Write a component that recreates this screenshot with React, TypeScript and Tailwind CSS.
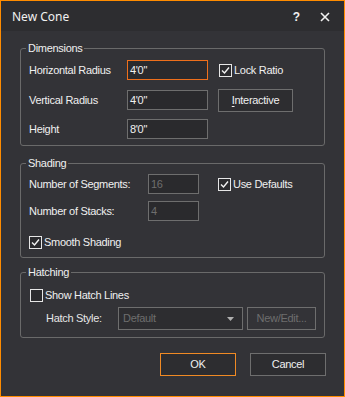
import { ReactNode } from "react";

const font = { fontFamily: '"Liberation Sans", Arial, sans-serif' };

function CheckBox({ checked, label }: { checked: boolean; label: string }) {
  return (
    <div className="flex items-center h-[16px]">
      <svg width="13" height="13" viewBox="0 0 13 13" className="shrink-0">
        <rect x="0.5" y="0.5" width="12" height="12" fill="#2b2b2e" stroke="#e6e6e6" />
        {checked && (
          <polyline points="3,6.5 5.5,9 10,3.5" fill="none" stroke="#f2f2f2" strokeWidth="1.4" />
        )}
      </svg>
      <span className="ml-[2px] text-[11px] tracking-[-0.3px] text-[#f0f0f0]">{label}</span>
    </div>
  );
}

function Field({ value, focused, disabled, w }: { value: string; focused?: boolean; disabled?: boolean; w: string }) {
  return (
    <div
      className={`${w} h-[20px] flex items-center pl-[2px] border bg-[#2a2a2d] text-[11px] tracking-[-0.3px] ${
        focused ? "border-[#ee6f1c]" : "border-[#6e6e6e]"
      } ${disabled ? "text-[#6e6e6e]" : "text-[#f0f0f0]"}`}
    >
      {value}
    </div>
  );
}

function Group({ title, className, children }: { title: string; className: string; children: ReactNode }) {
  return (
    <div className={`relative border border-[#6a6a6a] rounded-[3px] ${className}`}>
      <div className="absolute -top-[8px] left-[5px] bg-[#333337] px-[2px] text-[11px] tracking-[-0.3px] text-[#f0f0f0] leading-[14px]">
        {title}
      </div>
      {children}
    </div>
  );
}

export default function App() {
  return (
    <div
      className="w-[345px] h-[397px] border border-[#ff8c00] bg-[#333337] flex flex-col select-none"
      style={font}
    >
      <div className="h-[30px] bg-[#2d2d30] flex items-center pl-[11px] pr-[14px]">
        <span className="text-[12px] text-[#f1f1f1] mt-[1px]" style={{ fontFamily: '"Noto Sans", "Open Sans", sans-serif' }}>
          New Cone
        </span>
        <span className="ml-auto text-[12px] font-bold text-[#f1f1f1] mt-[1px]">?</span>
        <svg width="10" height="10" viewBox="0 0 10 10" className="ml-[20px] mt-[1px]">
          <path d="M1 1L9 9M9 1L1 9" stroke="#f1f1f1" strokeWidth="1.6" />
        </svg>
      </div>

      <div className="flex flex-col pl-[19px] pr-[19px]">
        <Group title="Dimensions" className="mt-[17px] pt-[11px] pb-[6px] pl-[8px]">
          <div className="flex items-center h-[20px]">
            <span className="w-[98px] text-[11px] tracking-[-0.3px] text-[#f0f0f0]">Horizontal Radius</span>
            <Field value={"4'0\""} focused w="w-[81px]" />
            <div className="ml-[11px]">
              <CheckBox checked label="Lock Ratio" />
            </div>
          </div>
          <div className="flex items-center h-[20px] mt-[10px]">
            <span className="w-[98px] text-[11px] tracking-[-0.3px] text-[#f0f0f0]">Vertical Radius</span>
            <Field value={"4'0\""} w="w-[81px]" />
            <div className="ml-[10px] w-[75px] h-[23px] border border-[#6e6e6e] bg-[#2d2d30] flex items-center justify-center text-[11px] tracking-[-0.3px] text-[#f0f0f0]">
              <span>
                <span className="underline underline-offset-2">I</span>nteractive
              </span>
            </div>
          </div>
          <div className="flex items-center h-[20px] mt-[9px]">
            <span className="w-[98px] text-[11px] tracking-[-0.3px] text-[#f0f0f0]">Height</span>
            <Field value={"8'0\""} w="w-[81px]" />
          </div>
        </Group>

        <Group title="Shading" className="mt-[17px] pt-[10px] pb-[7px] pl-[8px]">
          <div className="flex items-center h-[20px]">
            <span className="w-[119px] text-[11px] tracking-[-0.3px] text-[#f0f0f0]">Number of Segments:</span>
            <Field value="16" disabled w="w-[51px]" />
            <div className="ml-[19px]">
              <CheckBox checked label="Use Defaults" />
            </div>
          </div>
          <div className="flex items-center h-[20px] mt-[7px]">
            <span className="w-[119px] text-[11px] tracking-[-0.3px] text-[#f0f0f0]">Number of Stacks:</span>
            <Field value="4" disabled w="w-[51px]" />
          </div>
          <div className="mt-[13px]">
            <CheckBox checked label="Smooth Shading" />
          </div>
        </Group>

        <Group title="Hatching" className="mt-[14px] pt-[14px] pb-[7px] pl-[9px]">
          <CheckBox checked={false} label="Show Hatch Lines" />
          <div className="flex items-center h-[23px] mt-[4px] pl-[16px]">
            <span className="w-[72px] text-[11px] tracking-[-0.3px] text-[#e6e6e6]">Hatch Style:</span>
            <div className="w-[125px] h-[23px] border border-[#6e6e6e] bg-[#2d2d30] flex items-center pl-[4px] pr-[8px] text-[11px] tracking-[-0.3px] text-[#6e6e6e]">
              <span>Default</span>
              <svg width="7" height="4" viewBox="0 0 7 4" className="ml-auto">
                <path d="M0 0H7L3.5 4Z" fill="#b0b0b0" />
              </svg>
            </div>
            <div className="ml-[4px] w-[69px] h-[23px] border border-[#6e6e6e] bg-[#333337] flex items-center justify-center text-[11px] tracking-[-0.3px] text-[#6e6e6e]">
              New/Edit...
            </div>
          </div>
        </Group>

        <div className="flex justify-end mt-[15px] gap-[14px] -mr-[1px]">
          <div className="w-[76px] h-[23px] border border-[#f08a24] bg-[#2d2d30] flex items-center justify-center text-[11px] tracking-[-0.3px] text-[#f0f0f0]">
            OK
          </div>
          <div className="w-[76px] h-[23px] border border-[#6e6e6e] bg-[#2d2d30] flex items-center justify-center text-[11px] tracking-[-0.3px] text-[#f0f0f0]">
            Cancel
          </div>
        </div>
      </div>
    </div>
  );
}
